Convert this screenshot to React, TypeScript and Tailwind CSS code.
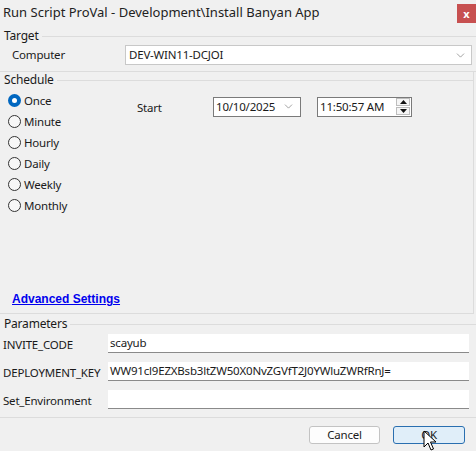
import { ChevronDown } from 'lucide-react'

const radios = ['Once', 'Minute', 'Hourly', 'Daily', 'Weekly', 'Monthly']

const params = [
  { name: 'INVITE_CODE', value: 'scayub' },
  { name: 'DEPLOYMENT_KEY', value: 'WW91cl9EZXBsb3ltZW50X0NvZGVfT2J0YWluZWRfRnJ=' },
  { name: 'Set_Environment', value: '' },
]

function GroupHeader({ title }: { title: string }) {
  return (
    <div className="flex h-[16px] items-center">
      <span className="pl-[4px] pr-[3px] text-[12px] leading-none">{title}</span>
      <div className="h-px flex-1 bg-[#dcdcdc]" />
    </div>
  )
}

function Radio({ label, checked }: { label: string; checked?: boolean }) {
  return (
    <div className="flex h-[21px] items-center gap-[3px] pl-[8px]">
      {checked ? (
        <span className="flex h-[13px] w-[13px] items-center justify-center rounded-full bg-[#0067c0]">
          <span className="h-[5px] w-[5px] rounded-full bg-white" />
        </span>
      ) : (
        <span className="h-[13px] w-[13px] rounded-full border border-[#333] bg-[#f7f7f7]" />
      )}
      <span>{label}</span>
    </div>
  )
}

export default function App() {
  return (
    <div className="relative flex h-[451px] w-[476px] flex-col overflow-hidden bg-[#f0f0f0] font-['Noto_Sans',sans-serif] text-[11.5px] tracking-[-0.2px] text-[#1a1a1a]">
      <div className="flex h-[27px] items-start justify-between tracking-normal">
        <span className="pl-[3px] pt-[3px] text-[13px] text-[#222]">Run Script ProVal - Development\Install Banyan App</span>
        <span className="mt-[4px] flex h-[19px] w-[19px] items-center justify-center bg-[#c75050] text-[11px] font-bold leading-none text-white">
          x
        </span>
      </div>

      <div className="mt-px">
        <GroupHeader title="Target" />
        <div className="mt-[1px] flex h-[20px] items-center">
          <span className="w-[125px] pl-[12px]">Computer</span>
          <div className="flex h-[20px] w-[347px] items-center justify-between border border-[#c8c8c8] bg-white pl-[3px] pr-[4px]">
            <span>DEV-WIN11-DCJOI</span>
            <ChevronDown size={13} strokeWidth={1.1} className="text-[#666]" />
          </div>
        </div>
        <div className="mt-[6px] h-px bg-[#dcdcdc]" />
      </div>

      <div className="mr-[2px] flex h-[242px] flex-col border-r border-b border-[#dcdcdc]">
        <GroupHeader title="Schedule" />
        <div className="mt-[2px] flex">
          <div className="w-[125px]">
            {radios.map((r, i) => (
              <Radio key={r} label={r} checked={i === 0} />
            ))}
          </div>
          <div className="flex h-[21px] items-center pt-[12px]">
            <span className="w-[88px] pl-[12px] pt-[2px]">Start</span>
            <div className="flex h-[20px] w-[88px] items-center justify-between border border-[#7a7a7a] bg-white pl-[2px] pr-[5px]">
              <span>10/10/2025</span>
              <ChevronDown size={13} strokeWidth={1.1} className="text-[#666]" />
            </div>
            <div className="ml-[16px] flex h-[20px] w-[95px] items-center justify-between border border-[#7a7a7a] bg-white pl-[2px] pr-[1px]">
              <span>11:50:57 AM</span>
              <div className="flex flex-col gap-px">
                <span className="flex h-[8px] w-[14px] items-center justify-center border border-[#bdbdbd] bg-[#f5f5f5]">
                  <svg width="7" height="4" viewBox="0 0 7 4">
                    <path d="M0 4 L3.5 0 L7 4 Z" fill="#111" />
                  </svg>
                </span>
                <span className="flex h-[8px] w-[14px] items-center justify-center border border-[#bdbdbd] bg-[#f5f5f5]">
                  <svg width="7" height="4" viewBox="0 0 7 4">
                    <path d="M0 0 L3.5 4 L7 0 Z" fill="#111" />
                  </svg>
                </span>
              </div>
            </div>
          </div>
        </div>
        <div className="mt-auto pb-[5px] pl-[12px] tracking-normal">
          <span className="font-['Liberation_Sans',sans-serif] text-[12px] font-bold text-[#0000ee] underline">Advanced Settings</span>
        </div>
      </div>

      <div className="mt-[2px] border-b border-[#dcdcdc] pb-[8px]">
        <GroupHeader title="Parameters" />
        <div className="mt-[2px] flex flex-col gap-[9px]">
          {params.map((p) => (
            <div key={p.name} className="flex h-[19px] items-center">
              <span className="w-[108px] pl-[3px] pt-[2px]">{p.name}</span>
              <div className="flex h-[19px] w-[361px] items-center border-b border-[#8a8a8a] bg-white pl-[2px]">
                {p.value}
              </div>
            </div>
          ))}
        </div>
      </div>

      <div className="mt-[8px] flex justify-end gap-[13px] pr-[11px]">
        <button className="h-[18px] w-[71px] rounded-[3px] border border-[#c3c3c3] bg-[#fdfdfd] text-[11.5px] leading-none">Cancel</button>
        <button className="h-[18px] w-[72px] rounded-[3px] border border-[#2a6fb0] bg-[#e0eef9] text-[11.5px] leading-none">OK</button>
      </div>

      <svg className="absolute left-[423px] top-[430px]" width="14" height="21" viewBox="0 0 14 21">
        <path d="M1 1 L1 17 L5 13 L8 20 L10.5 19 L7.5 12 L13 12 Z" fill="#fff" stroke="#000" strokeWidth="1" strokeLinejoin="round" />
      </svg>
    </div>
  )
}
